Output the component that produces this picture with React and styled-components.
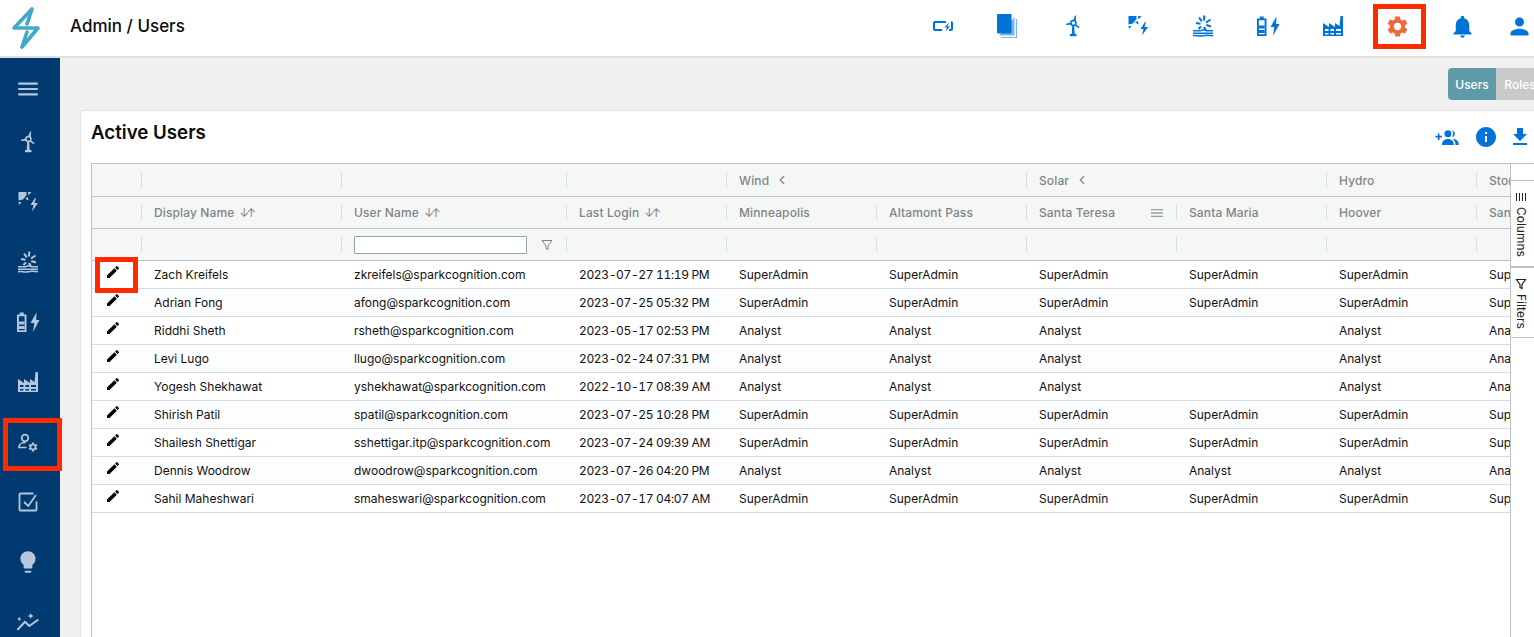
import React from "react";
import styled, { createGlobalStyle } from "styled-components";
import {
  MdEdit,
  MdSettings,
  MdNotifications,
  MdPerson,
  MdFileDownload,
  MdInfo,
  MdMenu,
  MdLightbulb,
} from "react-icons/md";
import { LuChevronLeft } from "react-icons/lu";

const GlobalStyle = createGlobalStyle`
  html, body {
    margin: 0;
    padding: 0;
    height: 100%;
    overflow: hidden;
    font-family: Inter, "Liberation Sans", sans-serif;
  }
  * {
    box-sizing: border-box;
  }
`;

const Page = styled.div`
  display: flex;
  flex-direction: column;
  height: 100vh;
  overflow: hidden;
  position: relative;
`;

const Header = styled.header`
  display: flex;
  align-items: center;
  height: 58px;
  flex-shrink: 0;
  background: #fff;
  border-bottom: 2px solid #dfdfdf;
`;

const LogoBox = styled.div`
  width: 70px;
  padding-left: 8px;
  display: flex;
  align-items: center;
`;

const PageTitle = styled.h1`
  margin: 0 0 4px;
  font-size: 17px;
  font-weight: 500;
  color: #0b0b0b;
`;

const TopNav = styled.nav`
  display: flex;
  margin-left: auto;
  margin-right: -10px;
  padding-bottom: 4px;
`;

const TopItem = styled.div`
  position: relative;
  display: flex;
  align-items: center;
  justify-content: center;
  flex-shrink: 0;
  width: ${(p) => (p.$narrow ? 49 : 65)}px;
  height: 40px;
  color: ${(p) => (p.$active ? "#ee6a3c" : "#0073d9")};
`;

const Body = styled.div`
  display: flex;
  flex: 1;
  min-height: 0;
`;

const Sidebar = styled.aside`
  width: 60px;
  flex-shrink: 0;
  padding: 7px 4px 0 0;
  background: #003a70;
  color: #b5c7dc;
  overflow: hidden;
`;

const SideItem = styled.div`
  display: flex;
  align-items: center;
  justify-content: center;
  height: ${(p) => (p.$menu ? 47 : 60)}px;
`;

const Main = styled.main`
  flex: 1;
  min-width: 0;
  display: flex;
  flex-direction: column;
  padding: 10px 0 0 20px;
  background: #f0f0f0;
  overflow: hidden;
`;

const Toggle = styled.div`
  display: flex;
  justify-content: flex-end;
  height: 32px;
  margin: 0 -10px 10px 0;
  flex-shrink: 0;
`;

const ToggleButton = styled.div`
  display: flex;
  align-items: center;
  justify-content: center;
  width: 48px;
  font-size: 12px;
  font-weight: 500;
  color: #fff;
  background: ${(p) => (p.$on ? "#5f9aa8" : "#c9c9c9")};
  border-radius: ${(p) => (p.$on ? "4px 0 0 4px" : "0 4px 4px 0")};
`;

const Card = styled.section`
  flex: 1;
  min-height: 0;
  display: flex;
  flex-direction: column;
  padding-left: 10px;
  background: #fff;
  border-top: 1px solid #e4e4e4;
  border-left: 1px solid #e4e4e4;
  border-radius: 4px 0 0 0;
`;

const CardHead = styled.div`
  display: flex;
  align-items: center;
  height: 52px;
  flex-shrink: 0;
`;

const CardTitle = styled.h2`
  margin: 0 0 10px;
  font-size: 18.7px;
  font-weight: 600;
  color: #0b0b0b;
`;

const CardActions = styled.div`
  display: flex;
  align-items: center;
  margin-left: auto;
  gap: 10px;
  margin-right: 2px;
  color: #0073d9;
`;

const Grid = styled.div`
  flex: 1;
  min-height: 0;
  display: flex;
  border: 1px solid #bdc3c7;
  border-right: 0;
  border-bottom: 0;
  font-size: 12px;
`;

const GridBody = styled.div`
  flex: 1;
  min-width: 0;
  overflow: hidden;
`;

const HeadRow = styled.div`
  display: flex;
  width: max-content;
  min-width: 100%;
  height: ${(p) => p.$h}px;
  background: #f5f7f7;
  border-bottom: 1px solid #bdc3c7;
`;

const HeadCell = styled.div`
  position: relative;
  display: flex;
  align-items: center;
  flex-shrink: 0;
  width: ${(p) => p.$w}px;
  padding-left: 12px;
  color: #7f8585;
  font-weight: 500;
  letter-spacing: 0.12px;
  white-space: nowrap;

  &::before {
    content: "";
    display: ${(p) => (p.$first ? "none" : "block")};
    position: absolute;
    left: -1px;
    top: 8px;
    bottom: 8px;
    width: 1px;
    background: #d9dedf;
  }
`;

const SortArrows = styled.span`
  margin-left: 5px;
  font-size: 12px;
  font-weight: 400;
  letter-spacing: -3px;
`;

const Chevron = styled(LuChevronLeft)`
  margin-left: 6px;
`;

const HeadMenu = styled(MdMenu)`
  margin-left: auto;
  margin-right: 12px;
  color: #9a9f9f;
`;

const FilterInput = styled.input`
  width: 173px;
  height: 18px;
  padding: 0 4px;
  background: #fff;
  border: 1px solid #95a5a6;
  border-radius: 1px;
`;

const FunnelMark = styled.svg`
  margin-left: 14px;
`;

const Row = styled.div`
  display: flex;
  width: max-content;
  height: 28px;
  background: ${(p) => (p.$odd ? "#fcfdfe" : "#fff")};
  border-bottom: 1px solid #d9dcde;
`;

const Cell = styled.div`
  display: flex;
  align-items: center;
  flex-shrink: 0;
  width: ${(p) => p.$w}px;
  padding-left: 12px;
  padding-bottom: 1px;
  color: #111;
  white-space: nowrap;
  font-variant-numeric: ${(p) => (p.$date ? "tabular-nums" : "normal")};
  letter-spacing: ${(p) => (p.$date ? "-0.36px" : "normal")};
`;

const EditCell = styled.div`
  display: flex;
  justify-content: center;
  flex-shrink: 0;
  width: ${(p) => p.$w}px;
  padding: 3px 8px 0 0;
  color: #000;
`;

const SidePanel = styled.div`
  width: 24px;
  flex-shrink: 0;
  padding-top: 16px;
  background: #fff;
  border-left: 1px solid #bdc3c7;
`;

const SideTab = styled.div`
  display: flex;
  flex-direction: column;
  align-items: center;
  height: ${(p) => p.$h}px;
  padding: 10px 3px 0 0;
  gap: 4px;
  border-top: 1px solid #bdc3c7;
  border-bottom: 1px solid #bdc3c7;
  color: #222;
  font-size: 12px;
`;

const SideLabel = styled.span`
  writing-mode: vertical-rl;
`;

const Mark = styled.div`
  position: absolute;
  left: ${(p) => p.$x}px;
  top: ${(p) => p.$y}px;
  width: ${(p) => p.$w}px;
  height: ${(p) => p.$h}px;
  border: 5px solid #ff2a00;
  pointer-events: none;
`;

const GroupAddMark = styled.svg`
  margin-right: 5px;
`;

const Logo = () => (
  <svg width="40" height="50" viewBox="0 0 40 50" fill="none" stroke="#3fa9c9" strokeWidth="3.600" strokeLinecap="round" strokeLinejoin="round">
    <path d="M24 6 6 25h24L14 44M24 6l-5 15M19 29l-5 15" />
  </svg>
);

const ChargeIcon = () => (
  <svg width="24" height="24" viewBox="0 0 24 24" fill="none" stroke="currentColor">
    <path d="M11 16H4a1 1 0 0 1-1-1V9a1 1 0 0 1 1-1h11M20 8a1 1 0 0 1 1 1v6a1 1 0 0 1-1 1h-2" strokeWidth="2" />
    <path d="m18 8.500-4.500 5H16l-1.500 4 4.500-5h-2.500z" fill="currentColor" stroke="none" />
  </svg>
);

const PagesIcon = () => (
  <svg width="24" height="26" viewBox="0 0 24 26" fill="none">
    <path d="M5 24.500h15.500V6" stroke="#7db4ea" strokeWidth="1.200" />
    <path d="M3 22.500h15.500V4" fill="#7db4ea" />
    <rect x="1" y="1" width="14.500" height="19.500" rx="1" fill="#0073d9" />
  </svg>
);

const WindIcon = () => (
  <svg width="24" height="24" viewBox="0 0 24 24" fill="currentColor">
    <path d="M11.200 12h2l.5 8.500h-3z" />
    <rect x="9" y="20" width="6.500" height="2.200" />
    <path d="M12 6.500 14.200 1.500l1 .3-.6 5.700zM15 10.500l3.500 2.500-.8 1.200-3.700-2.400zM9.800 8.500 5 9.700l.2 1.200 4.600-.2z" />
    <circle cx="12.400" cy="9" r="2.500" fill="none" stroke="currentColor" strokeWidth="1.600" />
  </svg>
);

const SolarIcon = () => (
  <svg width="24" height="24" viewBox="0 0 24 24" fill="currentColor">
    <path d="M2.500 2h8v3L7 9.500l-4.500 1z" />
    <path d="M12 2h3.500l-3 3.500zM9 8.500l3-1.500.5 3.500zM2.500 12h3l-2.500 3zM19 8l-4.500 7h3L16 21.500l6-8.500h-3.500l1.500-5z" />
  </svg>
);

const HydroIcon = () => (
  <svg width="24" height="24" viewBox="0 0 24 24" fill="none" stroke="currentColor">
    <path d="M12.800 6.500 13.500 1.500M15 8.500 19.500 5.500M15.300 11 20 12.500M13 13l2 3.500M10 12.500 7.500 15M9.500 9.800 5 9M10.800 7.300 8 3.500" strokeWidth="2" />
    <path d="M2 16.800h6.500c2 0 2-1 4-1s2 1 4 1H22M2 19.300h20M2 21.800c3.500-.8 6.500.8 10 0s6.500-.5 10 0" strokeWidth="1.500" />
  </svg>
);

const BatteryIcon = () => (
  <svg width="24" height="24" viewBox="0 0 24 24" fill="currentColor">
    <path fillRule="evenodd" d="M1 4.500h2.800V2.500h3.900v2h2.800v17.500H1zM2.900 6.300v13.900h5.700V6.300z" />
    <path d="M2.900 11.500h5.700v3H2.900zM2.900 16h5.700v3H2.900zM20.500 2.500 14.500 13h3.800L17 22l6.500-12h-3.300z" />
  </svg>
);

const FactoryIcon = () => (
  <svg width="24" height="24" viewBox="0 0 24 24" fill="currentColor">
    <path fillRule="evenodd" d="M2 9l6 4V9l6 4V9l4.500 3 1-10H22v20H2zM4 15v2h3.500v-2zM9.500 15v2h3.500v-2zM15 15v2h5v-2zM4 19v1.500h3.500V19zM9.500 19v1.500h3.500V19zM15 19v1.500h5V19z" />
  </svg>
);

const UserCogIcon = () => (
  <svg width="24" height="24" viewBox="0 0 24 24" fill="none" stroke="currentColor" strokeWidth="1.700">
    <circle cx="9" cy="8" r="3.300" />
    <path d="M10.500 17.500H3v-.8c0-2.500 3-4.200 6.500-4.200" />
    <MdSettings x="11.500" y="11.500" size={11} fill="currentColor" stroke="none" />
  </svg>
);

const CheckIcon = () => (
  <svg width="24" height="24" viewBox="0 0 24 24" fill="none" stroke="currentColor" strokeWidth="1.800">
    <path d="M20.500 11.500v8a1 1 0 0 1-1 1H4.500a1 1 0 0 1-1-1v-15a1 1 0 0 1 1-1h13" />
    <path d="m8 12 4.300 4 7.700-11" />
  </svg>
);

const TrendIcon = () => (
  <svg width="24" height="24" viewBox="0 0 24 24" fill="none" stroke="currentColor" strokeWidth="2" strokeLinecap="round" strokeLinejoin="round">
    <path d="M2 19.300 9 11.700l4.300 4.300 8.400-6" />
    <path d="m3.300 6.800.7 1.500 1.500.7-1.500.7-.7 1.500-.7-1.500L1.100 9l1.500-.7zM14.700 3l.9 2.100 2.100.9-2.100.9-.9 2.100-.9-2.100-2.100-.9 2.100-.9z" fill="currentColor" stroke="none" />
  </svg>
);

const GroupAddIcon = () => (
  <GroupAddMark width="24" height="17" viewBox="0 0 26 18" fill="currentColor">
    <path d="M.500 7.200h2.600V4.600h1.800v2.600h2.600V9H4.900v2.600H3.100V9H.500z" />
    <circle cx="14" cy="5" r="3.800" />
    <path d="M7.500 17c0-4 2.500-6.500 6.500-6.500s6.500 2.500 6.500 6.500z" />
    <path d="M18.500 1.300a3.800 3.800 0 0 1 0 7.400c.8-1.200 1-2.300 1-3.700s-.2-2.500-1-3.700zM19 10.300c4 .2 6.800 2.600 6.800 6.700h-3.600c0-2.800-1.200-5-3.200-6.700z" />
  </GroupAddMark>
);

const Funnel = () => (
  <FunnelMark width="12" height="12" viewBox="0 0 12 12" fill="none" stroke="#7f8585">
    <path d="M1 1.500h10L7 7v3.500L5 9.500V7z" />
  </FunnelMark>
);

const ColumnsGlyph = () => (
  <svg width="12" height="12" viewBox="0 0 12 12" stroke="#222" strokeWidth="1">
    <path d="M1.500 2v8M4.500 2v8M7.500 2v8M10.500 2v8" />
  </svg>
);

const FiltersGlyph = () => (
  <svg width="12" height="12" viewBox="0 0 12 12" fill="none" stroke="#222" strokeWidth="1.200">
    <path d="M1.500 1.500h9L7 6.500v4L5 9.500v-3z" />
  </svg>
);

const COLS = [50, 200, 225, 160, 150, 150, 150, 150, 150, 150];
const EDIT_W = COLS[0];

const SUPER = "SuperAdmin";
const users = [
  ["Zach Kreifels", "zkreifels@sparkcognition.com", "2023-07-27 11:19 PM", SUPER, SUPER],
  ["Adrian Fong", "afong@sparkcognition.com", "2023-07-25 05:32 PM", SUPER, SUPER],
  ["Riddhi Sheth", "rsheth@sparkcognition.com", "2023-05-17 02:53 PM", "Analyst", ""],
  ["Levi Lugo", "llugo@sparkcognition.com", "2023-02-24 07:31 PM", "Analyst", ""],
  ["Yogesh Shekhawat", "yshekhawat@sparkcognition.com", "2022-10-17 08:39 AM", "Analyst", ""],
  ["Shirish Patil", "spatil@sparkcognition.com", "2023-07-25 10:28 PM", SUPER, SUPER],
  ["Shailesh Shettigar", "sshettigar.itp@sparkcognition.com", "2023-07-24 09:39 AM", SUPER, SUPER],
  ["Dennis Woodrow", "dwoodrow@sparkcognition.com", "2023-07-26 04:20 PM", "Analyst", "Analyst"],
  ["Sahil Maheshwari", "smaheswari@sparkcognition.com", "2023-07-17 04:07 AM", SUPER, SUPER],
];

const groups = [
  { w: COLS[0], first: true },
  { w: COLS[1] },
  { w: COLS[2] },
  { w: COLS[3] },
  { w: COLS[4] + COLS[5], label: "Wind", chevron: true },
  { w: COLS[6] + COLS[7], label: "Solar", chevron: true },
  { w: COLS[8], label: "Hydro" },
  { w: COLS[9], label: "Storage" },
];

const heads = [
  { label: "" },
  { label: "Display Name", sort: true },
  { label: "User Name", sort: true },
  { label: "Last Login", sort: true },
  { label: "Minneapolis" },
  { label: "Altamont Pass" },
  { label: "Santa Teresa", menu: true },
  { label: "Santa Maria" },
  { label: "Hoover" },
  { label: "San Antonio" },
];

const topIcons = [
  <ChargeIcon key="charge" />,
  <PagesIcon key="pages" />,
  <WindIcon key="wind" />,
  <SolarIcon key="solar" />,
  <HydroIcon key="hydro" />,
  <BatteryIcon key="battery" />,
  <FactoryIcon key="factory" />,
  <MdSettings key="settings" size={25} />,
  <MdNotifications key="bell" size={27} />,
  <MdPerson key="person" size={27} />,
];

const sideIcons = [
  <WindIcon key="wind" />,
  <SolarIcon key="solar" />,
  <HydroIcon key="hydro" />,
  <BatteryIcon key="battery" />,
  <FactoryIcon key="factory" />,
  <UserCogIcon key="admin" />,
  <CheckIcon key="check" />,
  <MdLightbulb key="bulb" size={26} />,
  <TrendIcon key="trend" />,
];

export default function App() {
  return (
    <Page>
      <GlobalStyle />
      <Header>
        <LogoBox>
          <Logo />
        </LogoBox>
        <PageTitle>Admin / Users</PageTitle>
        <TopNav>
          {topIcons.map((icon, i) => (
            <TopItem key={i} $active={i === 7} $narrow={i === 9}>
              {icon}
            </TopItem>
          ))}
        </TopNav>
      </Header>
      <Body>
        <Sidebar>
          <SideItem $menu>
            <MdMenu size={26} />
          </SideItem>
          {sideIcons.map((icon, i) => (
            <SideItem key={i}>{icon}</SideItem>
          ))}
        </Sidebar>
        <Main>
          <Toggle>
            <ToggleButton $on>Users</ToggleButton>
            <ToggleButton>Roles</ToggleButton>
          </Toggle>
          <Card>
            <CardHead>
              <CardTitle>Active Users</CardTitle>
              <CardActions>
                <GroupAddIcon />
                <MdInfo size={24} />
                <MdFileDownload size={24} />
              </CardActions>
            </CardHead>
            <Grid>
              <GridBody>
                <HeadRow $h={33}>
                  {groups.map((g, i) => (
                    <HeadCell key={i} $w={g.w} $first={g.first}>
                      {g.label}
                      {g.chevron && <Chevron size={14} />}
                    </HeadCell>
                  ))}
                </HeadRow>
                <HeadRow $h={32}>
                  {heads.map((h, i) => (
                    <HeadCell key={i} $w={COLS[i]} $first={i === 0}>
                      {h.label}
                      {h.sort && <SortArrows>↓↑</SortArrows>}
                      {h.menu && <HeadMenu size={16} />}
                    </HeadCell>
                  ))}
                </HeadRow>
                <HeadRow $h={32}>
                  {COLS.map((w, i) => (
                    <HeadCell key={i} $w={w} $first={i === 0}>
                      {i === 2 && (
                        <>
                          <FilterInput aria-label="User Name filter" />
                          <Funnel />
                        </>
                      )}
                    </HeadCell>
                  ))}
                </HeadRow>
                {users.map((u, r) => {
                  const [name, mail, login, role, maria] = u;
                  const cells = [name, mail, login, role, role, role, maria, role, role];
                  return (
                    <Row key={mail} $odd={r % 2 === 1}>
                      <EditCell $w={EDIT_W}>
                        <MdEdit size={16} />
                      </EditCell>
                      {cells.map((c, i) => (
                        <Cell key={i} $w={COLS[i + 1]} $date={i === 2}>
                          {c}
                        </Cell>
                      ))}
                    </Row>
                  );
                })}
              </GridBody>
              <SidePanel>
                <SideTab $h={87}>
                  <ColumnsGlyph />
                  <SideLabel>Columns</SideLabel>
                </SideTab>
                <SideTab $h={71}>
                  <FiltersGlyph />
                  <SideLabel>Filters</SideLabel>
                </SideTab>
              </SidePanel>
            </Grid>
          </Card>
        </Main>
      </Body>
      <Mark $x={1373} $y={4} $w={53} $h={45} />
      <Mark $x={3} $y={418} $w={59} $h={53} />
      <Mark $x={95} $y={257} $w={43} $h={36} />
    </Page>
  );
}
